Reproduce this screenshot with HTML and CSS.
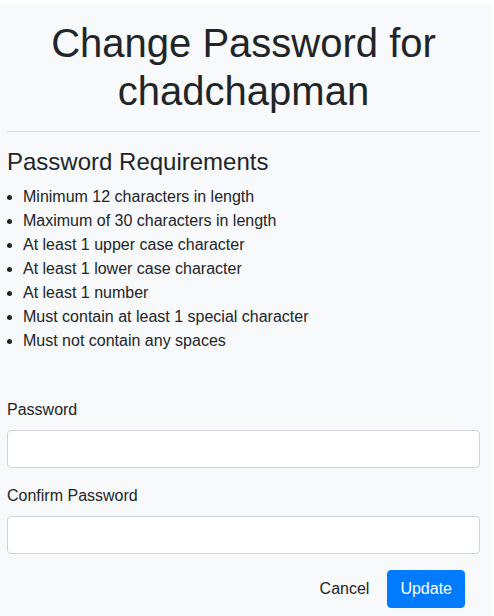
FILE: index.html
```html
<!DOCTYPE html>
<html lang="en">
<head>
<meta charset="utf-8">
<title>Change Password</title>
<link rel="stylesheet" href="styles.css">
</head>
<body>
<div class="page">
  <h1 class="title">Change Password for chadchapman</h1>
  <hr class="divider">
  <h4 class="req-title">Password Requirements</h4>
  <ul class="req-list">
    <li>Minimum 12 characters in length</li>
    <li>Maximum of 30 characters in length</li>
    <li>At least 1 upper case character</li>
    <li>At least 1 lower case character</li>
    <li>At least 1 number</li>
    <li>Must contain at least 1 special character</li>
    <li>Must not contain any spaces</li>
  </ul>
  <form class="form">
    <div class="form-group">
      <label class="label" for="pw">Password</label>
      <input class="input" id="pw" type="password">
    </div>
    <div class="form-group">
      <label class="label" for="pw2">Confirm Password</label>
      <input class="input" id="pw2" type="password">
    </div>
    <div class="actions">
      <button type="button" class="btn btn-cancel">Cancel</button>
      <button type="submit" class="btn btn-primary">Update</button>
    </div>
  </form>
</div>
</body>
</html>
```

FILE: styles.css
```css
html {
  background: #ffffff;
}
body {
  margin: 0;
  font-family: "Liberation Sans", Arial, sans-serif;
  font-size: 16px;
  line-height: 1.5;
  color: #212529;
}
.page {
  margin-top: 3px;
  width: 492px;
  box-sizing: border-box;
  padding: 16px 12px 20px 7px;
  background: #f8f9fa;
  min-height: 613px;
}
.title {
  margin: 0;
  font-size: 40px;
  font-weight: 400;
  line-height: 48px;
  text-align: center;
}
.divider {
  margin: 16px 0;
  border: 0;
  border-top: 1px solid rgba(0, 0, 0, 0.1);
}
.req-title {
  margin: 0 0 8px;
  font-size: 24px;
  font-weight: 400;
  line-height: 28.8px;
}
.req-list {
  margin: 0 0 45px;
  padding-left: 16px;
}
.form-group {
  margin-bottom: 16px;
}
.label {
  display: block;
  margin-bottom: 8px;
}
.input {
  display: block;
  width: 100%;
  height: 38px;
  box-sizing: border-box;
  padding: 6px 12px;
  font: inherit;
  background: #ffffff;
  border: 1px solid #ced4da;
  border-radius: 4px;
}
.actions {
  display: flex;
  justify-content: flex-end;
  gap: 5px;
  padding-right: 15px;
}
.btn {
  height: 38px;
  padding: 6px 12px;
  font: inherit;
  line-height: 24px;
  border: 1px solid transparent;
  border-radius: 4px;
  cursor: pointer;
}
.btn-cancel {
  background: transparent;
  color: #212529;
}
.btn-primary {
  background: #007bff;
  border-color: #007bff;
  color: #ffffff;
}
```
